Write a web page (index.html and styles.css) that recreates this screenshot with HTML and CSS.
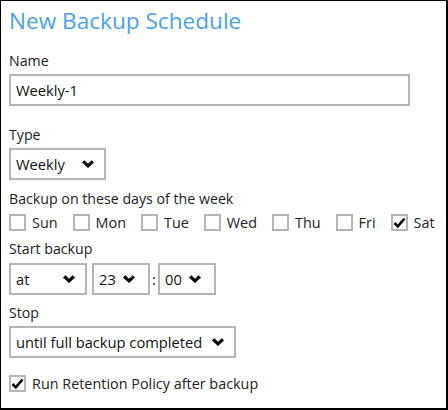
FILE: index.html
```html
<!DOCTYPE html>
<html>
<head>
<meta charset="utf-8">
<link rel="stylesheet" href="styles.css">
</head>
<body>
<div class="panel">
  <h1 class="title">New Backup Schedule</h1>

  <div class="label label-name">Name</div>
  <div class="input input-name">Weekly-1</div>

  <div class="label label-type">Type</div>
  <div class="select select-type"><span>Weekly</span><svg class="chev" viewBox="0 0 12 8"><polygon points="0,2.6 2.3,0.3 6,3.8 9.7,0.3 12,2.6 6,8"/></svg></div>

  <div class="label label-days">Backup on these days of the week</div>
  <div class="days">
    <label class="check"><span class="box"></span><span>Sun</span></label>
    <label class="check"><span class="box"></span><span>Mon</span></label>
    <label class="check"><span class="box"></span><span>Tue</span></label>
    <label class="check"><span class="box"></span><span>Wed</span></label>
    <label class="check"><span class="box"></span><span>Thu</span></label>
    <label class="check"><span class="box"></span><span>Fri</span></label>
    <label class="check"><span class="box checked"><svg viewBox="0 0 13 13"><path d="M1.5 7 L4.8 10.3 L11.5 2.5"/></svg></span><span>Sat</span></label>
  </div>

  <div class="label label-start">Start backup</div>
  <div class="time">
    <div class="select select-at"><span>at</span><svg class="chev" viewBox="0 0 12 8"><polygon points="0,2.6 2.3,0.3 6,3.8 9.7,0.3 12,2.6 6,8"/></svg></div>
    <div class="select select-hour"><span>23</span><svg class="chev" viewBox="0 0 12 8"><polygon points="0,2.6 2.3,0.3 6,3.8 9.7,0.3 12,2.6 6,8"/></svg></div>
    <span class="colon">:</span>
    <div class="select select-min"><span>00</span><svg class="chev" viewBox="0 0 12 8"><polygon points="0,2.6 2.3,0.3 6,3.8 9.7,0.3 12,2.6 6,8"/></svg></div>
  </div>

  <div class="label label-stop">Stop</div>
  <div class="select select-stop"><span>until full backup completed</span><svg class="chev" viewBox="0 0 12 8"><polygon points="0,2.6 2.3,0.3 6,3.8 9.7,0.3 12,2.6 6,8"/></svg></div>

  <label class="check retention"><span class="box checked"><svg viewBox="0 0 13 13"><path d="M1.5 7 L4.8 10.3 L11.5 2.5"/></svg></span><span>Run Retention Policy after backup</span></label>
</div>
</body>
</html>
```

FILE: styles.css
```css
html, body {
  margin: 0;
  padding: 0;
  background: #ffffff;
}

.panel {
  width: 448px;
  height: 410px;
  box-sizing: border-box;
  border-style: solid;
  border-color: #000000;
  border-width: 1px 2px 2px 1px;
  padding: 5px 0 0 8px;
  font-family: "Open Sans", "Noto Sans", sans-serif;
  color: #222222;
  display: flex;
  flex-direction: column;
  align-items: flex-start;
}

.title {
  margin: 0;
  font-size: 22.6px;
  line-height: 30px;
  font-weight: 400;
  color: #4a9feb;
}

.label {
  font-size: 14.2px;
  line-height: 20px;
  color: #222222;
}

.label-name { margin-top: 15px; }
.label-type { margin-top: 19px; }
.label-days { margin-top: 9px; }
.label-start { margin-top: 7px; }
.label-stop { margin-top: 8px; }

.input,
.select {
  box-sizing: border-box;
  height: 32px;
  border: 2px solid #b5b5b5;
  background: #ffffff;
  font-size: 14.7px;
  color: #111111;
  display: flex;
  align-items: center;
  padding: 0 10px 0 5px;
}

.input-name {
  margin-top: 3px;
  width: 401px;
  height: 32px;
}

.select {
  justify-content: space-between;
}

.select-type {
  margin-top: 3px;
  width: 97px;
}

.chev {
  width: 12px;
  height: 8px;
  fill: #000000;
  flex: none;
}

.days {
  margin-top: 3px;
  display: flex;
  gap: 15px;
}

.check {
  display: flex;
  align-items: center;
  height: 20px;
  font-size: 14.4px;
  color: #222222;
  gap: 6px;
}

.box {
  box-sizing: border-box;
  width: 17px;
  height: 17px;
  border: 2px solid #b5b5b5;
  background: #ffffff;
  display: flex;
  align-items: center;
  justify-content: center;
}

.box svg {
  width: 13px;
  height: 13px;
  fill: none;
  stroke: #000000;
  stroke-width: 2.6;
}

.time {
  margin-top: 4px;
  display: flex;
  align-items: center;
}

.select-at { width: 78px; }
.select-hour { width: 58px; margin-left: 5px; padding-right: 13px; }
.select-min { width: 58px; padding-right: 13px; }

.colon {
  font-size: 15px;
  width: 8px;
  text-align: center;
  color: #111111;
}

.select-stop {
  margin-top: 3px;
  width: 227px;
}

.retention {
  margin-top: 15px;
}
```
